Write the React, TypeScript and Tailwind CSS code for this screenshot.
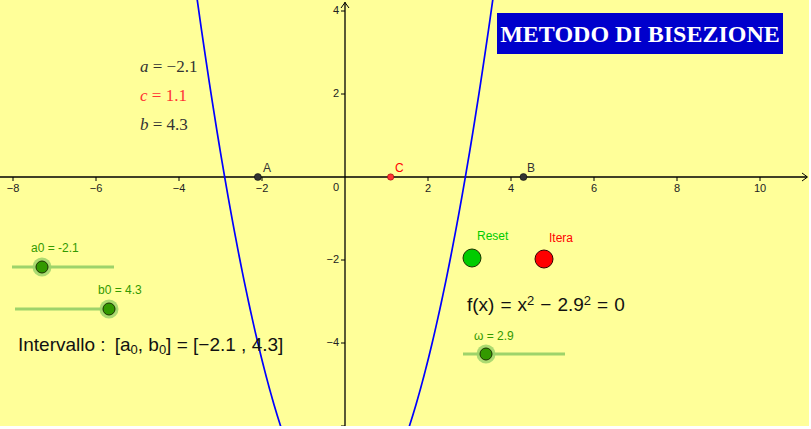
import React from 'react';

// graph mapping: 41.5 px per unit, origin at (345, 177)
const S = 41.5;
const OX = 345;
const OY = 177;
const px = (x: number) => OX + x * S;
const py = (y: number) => OY - y * S;

const W = 2.9;
const f = (x: number) => x * x - W * W;

function curvePath() {
  const pts: string[] = [];
  for (let i = 0; i <= 200; i++) {
    const x = -3.8 + (7.6 * i) / 200;
    pts.push(`${i === 0 ? 'M' : 'L'}${px(x).toFixed(2)},${py(f(x)).toFixed(2)}`);
  }
  return pts.join(' ');
}

const xTicks = [-8, -6, -4, -2, 2, 4, 6, 8, 10];
const yTicks = [4, 2, -2, -4, -6];
const yLabels = [4, 2, -2, -4];

function Slider({ x1, x2, y, knob }: { x1: number; x2: number; y: number; knob: number }) {
  return (
    <g>
      <line x1={x1} y1={y} x2={x2} y2={y} stroke="#9ed36a" strokeWidth={3} />
      <circle cx={knob} cy={y} r={9.5} fill="#9ed36a" opacity={0.85} />
      <circle cx={knob} cy={y} r={6} fill="#339900" stroke="#1a3300" strokeWidth={1} />
    </g>
  );
}

function Label({ x, y, className, children }: { x: number; y: number; className: string; children: React.ReactNode }) {
  return (
    <div className={`absolute leading-none whitespace-nowrap ${className}`} style={{ left: x, top: y }}>
      {children}
    </div>
  );
}

export default function App() {
  return (
    <div className="w-[811px] h-[429px] bg-white">
      <div className="relative w-[809px] h-[426px] bg-[#ffff99] overflow-hidden font-['Liberation_Sans',Arial,sans-serif]">
        <svg className="absolute inset-0" width={809} height={426}>
          {/* axes */}
          <line x1={0} y1={OY} x2={807} y2={OY} stroke="#000" strokeWidth={1.3} />
          <path d="M802,173 L807.5,177 L802,181" fill="none" stroke="#000" strokeWidth={1} />
          <line x1={OX} y1={2} x2={OX} y2={426} stroke="#000" strokeWidth={1.3} />
          <path d="M341,8 L345,2.5 L349,8" fill="none" stroke="#000" strokeWidth={1} />
          {xTicks.map((t) => (
            <line key={t} x1={px(t)} y1={OY} x2={px(t)} y2={OY + 4} stroke="#000" strokeWidth={1} />
          ))}
          {yTicks.map((t) => (
            <line key={t} x1={OX - 4} y1={py(t)} x2={OX} y2={py(t)} stroke="#000" strokeWidth={1} />
          ))}

          {/* f(x) */}
          <path d={curvePath()} fill="none" stroke="#0000ff" strokeWidth={1.7} />

          {/* points */}
          <circle cx={px(-2.1)} cy={OY} r={3.5} fill="#333" stroke="#000" strokeWidth={0.5} />
          <circle cx={px(1.1)} cy={OY} r={3.2} fill="#ff3333" stroke="#800" strokeWidth={0.5} />
          <circle cx={px(4.3)} cy={OY} r={3.5} fill="#333" stroke="#000" strokeWidth={0.5} />

          {/* sliders */}
          <Slider x1={12} x2={114} y={267} knob={42} />
          <Slider x1={15} x2={117} y={309} knob={109} />
          <Slider x1={463} x2={565} y={354} knob={486} />

          {/* buttons */}
          <circle cx={472} cy={258} r={9} fill="#00cc00" stroke="#1a3300" strokeWidth={1} />
          <circle cx={544} cy={259} r={9} fill="#ff0000" stroke="#330000" strokeWidth={1} />
        </svg>

        {/* tick labels */}
        {xTicks.map((t) => (
          <Label key={t} x={px(t) - 10} y={183} className="w-5 text-center text-[11px] text-[#222]">
            {t < 0 ? `\u2212${-t}` : t}
          </Label>
        ))}
        <Label x={333} y={182} className="text-[11px] text-[#222]">0</Label>
        {yLabels.map((t) => (
          <Label key={t} x={319} y={py(t) - 6} className="w-5 text-right text-[11px] text-[#222]">
            {t < 0 ? `\u2212${-t}` : t}
          </Label>
        ))}

        {/* point labels */}
        <Label x={263} y={162} className="text-[12px] text-[#333]">A</Label>
        <Label x={395} y={162} className="text-[12px] text-[#ff0000]">C</Label>
        <Label x={527} y={162} className="text-[12px] text-[#333]">B</Label>

        {/* title */}
        <div className="absolute left-[497px] top-[13px] w-[286px] h-[41px] bg-[#0000cc] flex items-center justify-center">
          <span className="text-white font-bold text-[24px] font-['Liberation_Serif','Times_New_Roman',serif]">
            METODO DI BISEZIONE
          </span>
        </div>

        {/* values */}
        <div className="absolute left-[140px] top-[57px] flex flex-col gap-[10px] font-['Liberation_Serif',serif] text-[17px] leading-[19px] text-[#333]">
          <div><i>a</i> = −2.1</div>
          <div className="text-[#ff3333]"><i>c</i> = 1.1</div>
          <div><i>b</i> = 4.3</div>
        </div>

        {/* slider labels */}
        <Label x={31} y={242} className="text-[12px] text-[#339900]">a0 = -2.1</Label>
        <Label x={98} y={284} className="text-[12px] text-[#339900]">b0 = 4.3</Label>
        <Label x={474} y={330} className="text-[12px] text-[#339900]">ω = 2.9</Label>

        {/* button labels */}
        <Label x={477} y={230} className="text-[12px] text-[#00cc00]">Reset</Label>
        <Label x={549} y={232} className="text-[12px] text-[#ff0000]">Itera</Label>

        {/* formulas */}
        <Label x={18} y={335} className="text-[19px] text-[#111] flex items-baseline gap-[9px]">
          <span>Intervallo :</span>
          <span>[a<sub className="text-[13px]">0</sub>, b<sub className="text-[13px]">0</sub>] = [−2.1 , 4.3]</span>
        </Label>
        <Label x={467} y={295} className="text-[19px] text-[#111] flex items-baseline gap-[6px]">
          <span>f(x)</span>
          <span>=</span>
          <span>x<sup className="text-[13px]">2</sup></span>
          <span>−</span>
          <span>2.9<sup className="text-[13px]">2</sup></span>
          <span>=</span>
          <span>0</span>
        </Label>
      </div>
    </div>
  );
}
